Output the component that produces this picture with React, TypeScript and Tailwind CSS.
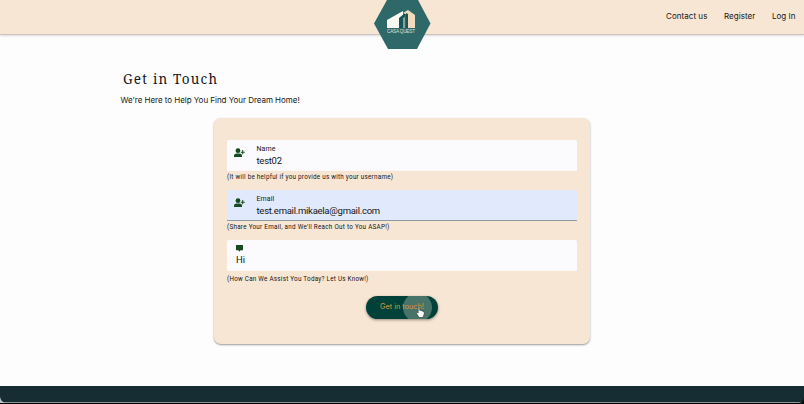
import type { ReactNode } from "react";

function Logo() {
  return (
    <svg className="absolute left-[374px] top-0" width="57" height="50" viewBox="0 0 57 50">
      <path d="M13 0H44L56.5 23.5L43 49H14L0 23.5Z" fill="#2f6868" />
      <path d="M13 28V20L29 11V28Z" fill="#fbfaf2" />
      <path d="M25 28V18L31 13V28Z" fill="#17555a" />
      <path d="M29 28V18L31 17V28Z" fill="#7fa49d" />
      <path d="M29 13L34 10L41 15V28H34V15Z" fill="#f0dcbc" />
      <path d="M32 28V13L34 14V28Z" fill="#244f51" />
      <text x="13" y="33" fontSize="4.6" textLength="28" fill="#dce5dc" fontFamily="Liberation Sans, sans-serif">CASA QUEST</text>
    </svg>
  );
}

function PersonAdd() {
  return (
    <svg width="12" height="10" viewBox="0 0 12 10" fill="#174b20">
      <circle cx="4" cy="2.7" r="2.4" />
      <path d="M0 9V7.7C0 6.2 1.3 5.4 2.8 5.4H5.2C6.7 5.4 8 6.3 8 7.7V9Z" />
      <path d="M8.2 2.1H9.2V3.7H10.8V4.7H9.2V6.3H8.2V4.7H6.8V3.7H8.2Z" />
    </svg>
  );
}

function Field({ label, children, active = false }: { label: string; children: ReactNode; active?: boolean }) {
  return (
    <div className={`flex h-[31px] rounded-t-[2px] border-b pl-[7px] ${active ? "border-[#8d9aab] bg-[#e1eafd]" : "border-[#faf7f6] bg-[#fbfbfe]"}`}>
      <div className="w-[22.5px] pt-[8px]"><PersonAdd /></div>
      <div className="whitespace-nowrap pt-[4px] font-['Roboto',sans-serif] text-[#151515]">
        <div className="text-[7px] leading-[10px] tracking-[0.1px]">{label}</div>
        <div className="text-[9.5px] leading-[14px] tracking-[-0.26px]">{children}</div>
      </div>
    </div>
  );
}

export default function App() {
  return (
    <div className="relative flex h-[404px] w-[804px] flex-col overflow-hidden bg-[#fdfdfd] font-['Inter',sans-serif] text-[#151515]">
      <header className="flex h-[35px] shrink-0 items-start border-b border-[#cfc4bd] bg-[#f7e6d3] pl-[666px] pt-[11px] text-[8px] leading-[11px] whitespace-nowrap shadow-[0_1px_2px_#0002]">
        <a className="w-[58px] tracking-[0.05px]">Contact us</a>
        <a className="w-[48px] tracking-[0.05px]">Register</a>
        <a className="tracking-[0px]">Log In</a>
      </header>
      <Logo />

      <main className="h-[351px] shrink-0">
        <h1 className="ml-[123px] pt-[35px] font-['Noto_Serif','DejaVu_Serif',serif] text-[13.5px] leading-[18px] tracking-[1.2px]">Get in Touch</h1>
        <p className="ml-[120.5px] mt-[6px] text-[8px] leading-[12px] tracking-[-0.03px]">We're Here to Help You Find Your Dream Home!</p>

        <form className="ml-[214px] mt-[12px] h-[226px] w-[376px] rounded-[7px] bg-[#f7e6d3] px-[13px] pt-[22px] shadow-[0_1px_2px_#0006]">
          <Field label="Name">test02</Field>
          <p className="h-[19px] whitespace-nowrap font-['Roboto',sans-serif] text-[6.3px] leading-[12px] tracking-[0.25px]">(It will be helpful if you provide us with your username)</p>
          <Field label="Email" active>test.email.mikaela@gmail.com</Field>
          <p className="h-[19px] whitespace-nowrap font-['Roboto',sans-serif] text-[6.3px] leading-[12px] tracking-[0.27px]">(Share Your Email, and We'll Reach Out to You ASAP!)</p>
          <div className="h-[31px] rounded-t-[2px] border-b border-[#faf7f6] bg-[#fbfbfe] pl-[9px] pt-[5px] font-['Roboto',sans-serif]">
            <svg width="7" height="7" viewBox="0 0 7 7" fill="#174b20"><path d="M0 0H7V5.3H4.5L3.5 6.8L2.5 5.3H0Z" /></svg>
            <div className="mt-[1px] text-[9.5px] leading-[14px]">Hi</div>
          </div>
          <p className="mt-[3px] whitespace-nowrap font-['Roboto',sans-serif] text-[6.3px] leading-[11px] tracking-[0.25px]">(How Can We Assist You Today? Let Us Know!)</p>
          <button type="button" className="relative ml-[139px] mt-[11px] flex h-[23px] w-[72px] items-center justify-center overflow-hidden rounded-full bg-[#00423a] text-[7.3px] whitespace-nowrap text-[#d69a3c] shadow-[0_1px_3px_#0006]">
            <span className="absolute left-[37px] top-[-3px] size-[29px] rounded-full bg-[#477369]" />
            <span className="relative">Get in touch!</span>
          </button>
        </form>
      </main>

      <footer className="h-[18px] shrink-0 border-b border-black bg-[#172d34]">
        <div className="h-[17px] border-b border-[#8d9293]" />
      </footer>
      <svg className="absolute left-0 top-[396px]" width="5" height="7" viewBox="0 0 5 7"><path d="M0 0Q0 5 5 7H0Z" fill="#bdc3c1" /></svg>
      <svg className="absolute left-[799px] top-[397px]" width="5" height="7" viewBox="0 0 5 7"><path d="M5 0Q5 5 0 6V7H5Z" fill="#080d0f" /></svg>
      <svg className="absolute left-[416px] top-[306px]" width="9" height="12" viewBox="0 0 9 12">
        <path d="M2.2.8C2.8.1 3.7.5 3.7 1.3V4.3L5.1 4.6L6.3 5L8 5.7C8.7 7.6 8 9 7.3 10V11.5H3.1L.7 7.8C.2 6.8 1 6.2 1.6 6.6L2.2 7Z" fill="white" stroke="#26302c" strokeWidth=".6" />
      </svg>
    </div>
  );
}
